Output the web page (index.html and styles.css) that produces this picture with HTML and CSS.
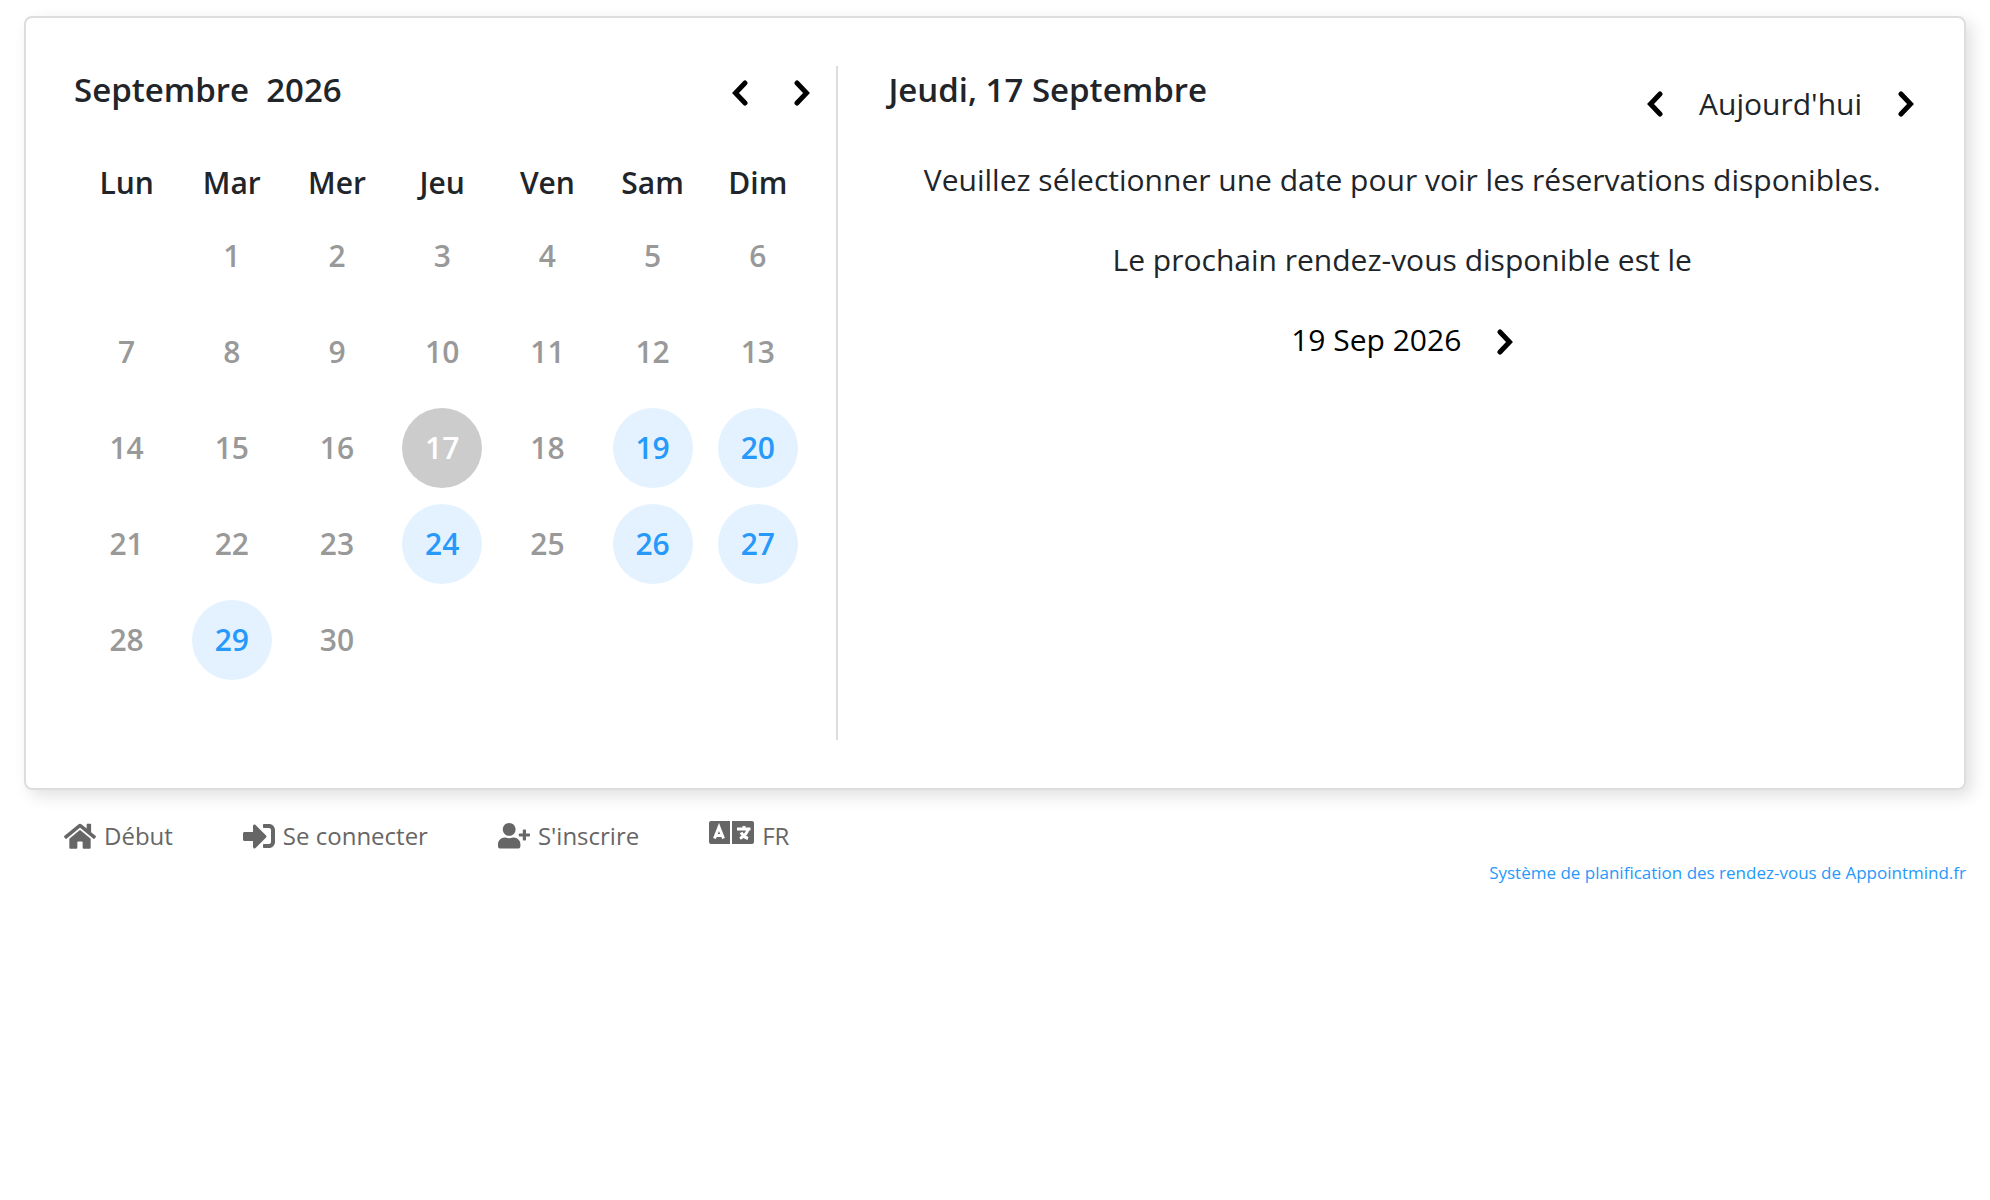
FILE: index.html
```html
<!DOCTYPE html>
<html lang="fr">
<head>
    <meta charset="UTF-8">
    <meta name="viewport" content="width=device-width, initial-scale=1.0">
    <title>Calendrier des rendez-vous</title>
    <link rel="stylesheet" href="styles.css">
</head>
<body>

    <!-- shared chevrons -->
    <svg class="sprite" aria-hidden="true">
        <symbol id="chevron-left" viewBox="0 0 16 26">
            <path d="M13 3L3.500 13L13 23" fill="none" stroke="#000" stroke-width="5" stroke-linecap="round" stroke-linejoin="miter"/>
        </symbol>
        <symbol id="chevron-right" viewBox="0 0 16 26">
            <path d="M3 3L12.500 13L3 23" fill="none" stroke="#000" stroke-width="5" stroke-linecap="round" stroke-linejoin="miter"/>
        </symbol>
    </svg>

    <main class="card">
        <section class="month">
            <div class="month-header">
                <h2>Septembre&nbsp; 2026</h2>
                <div class="month-nav">
                    <button type="button" class="arrow" aria-label="Mois précédent"><svg><use href="#chevron-left"/></svg></button>
                    <button type="button" class="arrow" aria-label="Mois suivant"><svg><use href="#chevron-right"/></svg></button>
                </div>
            </div>

            <table class="calendar">
                <thead>
                    <tr><th>Lun</th><th>Mar</th><th>Mer</th><th>Jeu</th><th>Ven</th><th>Sam</th><th>Dim</th></tr>
                </thead>
                <tbody>
                    <tr><td></td><td>1</td><td>2</td><td>3</td><td>4</td><td>5</td><td>6</td></tr>
                    <tr><td>7</td><td>8</td><td>9</td><td>10</td><td>11</td><td>12</td><td>13</td></tr>
                    <tr><td>14</td><td>15</td><td>16</td><td><span class="day selected">17</span></td><td>18</td><td><a href="#" class="day free">19</a></td><td><a href="#" class="day free">20</a></td></tr>
                    <tr><td>21</td><td>22</td><td>23</td><td><a href="#" class="day free">24</a></td><td>25</td><td><a href="#" class="day free">26</a></td><td><a href="#" class="day free">27</a></td></tr>
                    <tr><td>28</td><td><a href="#" class="day free">29</a></td><td>30</td><td></td><td></td><td></td><td></td></tr>
                </tbody>
            </table>
        </section>

        <section class="agenda">
            <div class="agenda-header">
                <h2>Jeudi, 17 Septembre</h2>
                <div class="day-nav">
                    <button type="button" class="arrow" aria-label="Jour précédent"><svg><use href="#chevron-left"/></svg></button>
                    <span>Aujourd'hui</span>
                    <button type="button" class="arrow" aria-label="Jour suivant"><svg><use href="#chevron-right"/></svg></button>
                </div>
            </div>
            <div class="agenda-body">
                <p>Veuillez sélectionner une date pour voir les réservations disponibles.</p>
                <p>Le prochain rendez-vous disponible est le</p>
                <a href="#" class="next-date">19 Sep 2026 <svg><use href="#chevron-right"/></svg></a>
            </div>
        </section>
    </main>

    <nav class="menu">
        <a href="#">
            <svg class="icon" viewBox="0 0 576 512"><path d="M280.370 148.260L96 300.110V464a16 16 0 0 0 16 16l112.060-.29a16 16 0 0 0 15.920-16V368a16 16 0 0 1 16-16h64a16 16 0 0 1 16 16v95.640a16 16 0 0 0 16 16.050L464 480a16 16 0 0 0 16-16V300L295.670 148.260a12.190 12.190 0 0 0-15.300 0zM571.600 251.470L488 182.560V44.050a12 12 0 0 0-12-12h-56a12 12 0 0 0-12 12v72.610L318.470 43a48 48 0 0 0-61 0L4.340 251.470a12 12 0 0 0-1.600 16.900l25.500 31A12 12 0 0 0 45.150 301l235.220-193.740a12.190 12.190 0 0 1 15.300 0L530.900 301a12 12 0 0 0 16.900-1.600l25.500-31a12 12 0 0 0-1.700-16.930z"/></svg>
            Début
        </a>
        <a href="#">
            <svg class="icon" viewBox="0 0 512 512"><path d="M416 448h-84c-6.600 0-12-5.400-12-12v-40c0-6.600 5.400-12 12-12h84c17.700 0 32-14.300 32-32V160c0-17.700-14.300-32-32-32h-84c-6.600 0-12-5.400-12-12V76c0-6.600 5.400-12 12-12h84c53 0 96 43 96 96v192c0 53-43 96-96 96zm-47-201L201 79c-15-15-41-4.500-41 17v96H24c-13.300 0-24 10.700-24 24v96c0 13.300 10.700 24 24 24h136v96c0 21.500 26 32 41 17l168-168c9.300-9.400 9.300-24.600 0-34z"/></svg>
            Se connecter
        </a>
        <a href="#">
            <svg class="icon" viewBox="0 0 640 512"><path d="M624 208h-64v-64c0-8.800-7.200-16-16-16h-32c-8.800 0-16 7.200-16 16v64h-64c-8.800 0-16 7.200-16 16v32c0 8.800 7.200 16 16 16h64v64c0 8.800 7.200 16 16 16h32c8.800 0 16-7.200 16-16v-64h64c8.800 0 16-7.200 16-16v-32c0-8.800-7.200-16-16-16zm-400 48c70.700 0 128-57.300 128-128S294.700 0 224 0 96 57.300 96 128s57.300 128 128 128zm89.600 32h-16.700c-22.200 10.200-46.900 16-72.900 16s-50.600-5.800-72.900-16h-16.700C60.200 288 0 348.200 0 422.400V464c0 26.500 21.500 48 48 48h352c26.500 0 48-21.500 48-48v-41.600c0-74.200-60.200-134.400-134.400-134.400z"/></svg>
            S'inscrire
        </a>
        <a href="#">
            <svg class="icon-lang" viewBox="0 0 45 24">
                <path d="M2 0h19v23H2a2 2 0 0 1-2-2V2a2 2 0 0 1 2-2zM23 0h20a2 2 0 0 1 2 2v19a2 2 0 0 1-2 2H23z"/>
                <path d="M5.500 17.500L10 6L14.500 17.500M7 14.500h6M28 8h13.500M35 5v3M39 8.500q-2 6-8 9M32 11.500q2.500 4.500 7 6" fill="none" stroke="#fff" stroke-width="3"/>
            </svg>
            FR
        </a>
    </nav>

    <footer class="credit">
        <a href="#">Système de planification des rendez-vous de Appointmind.fr</a>
    </footer>

</body>
</html>
```
FILE: styles.css
```css
* {
    box-sizing: border-box;
}

body {
    margin: 0;
    padding: 16px 24px;
    font-family: "Open Sans", "Noto Sans", sans-serif;
    font-size: 30px;
    line-height: 48px;
    color: #212529;
    background-color: #fff;
}

h2 {
    margin: 0;
    font-size: 33px;
    font-weight: 600;
    line-height: 48px;
}

p {
    margin: 0;
}

a {
    text-decoration: none;
}

.sprite {
    display: none;
}

.card {
    display: flex;
    padding: 48px;
    border: 2px solid #ddd;
    border-radius: 8px;
    box-shadow: 6px 6px 16px rgba(0, 0, 0, 0.12);
}

/* left side: month */
.month {
    flex: 0 0 41.5%;
    padding-right: 26px;
    padding-bottom: 52px;
    border-right: 2px solid #ddd;
}

.month-header {
    display: flex;
    justify-content: space-between;
    align-items: center;
}

.month-nav {
    display: flex;
    gap: 46px;
    padding-top: 6px;
}

.arrow {
    display: flex;
    padding: 0;
    border: 0;
    background: none;
    cursor: pointer;
}

.arrow svg,
.next-date svg {
    width: 16px;
    height: 26px;
}

.calendar {
    width: 100%;
    margin-top: 36px;
    table-layout: fixed;
    border-collapse: collapse;
    text-align: center;
    font-weight: 600;
}

.calendar th {
    height: 58px;
    padding: 8px 0 0;
    font-weight: 600;
}

.calendar td {
    height: 96px;
    padding: 0;
    color: #999;
}

.day {
    display: block;
    width: 80px;
    margin: 0 auto;
    border-radius: 50%;
    line-height: 80px;
}

.free {
    color: #2699fb;
    background-color: #e3f2fe;
}

.selected {
    color: #fff;
    background-color: #ccc;
}

/* right side: appointments of the day */
.agenda {
    flex: 1;
    padding-left: 50px;
}

.agenda-header {
    display: flex;
    justify-content: space-between;
}

.day-nav {
    display: flex;
    align-items: center;
    gap: 36px;
    padding: 14px 2px 0 0;
}

.agenda-body {
    display: flex;
    flex-direction: column;
    align-items: center;
    gap: 32px;
    margin-top: 28px;
    text-align: center;
}

.next-date {
    display: flex;
    align-items: center;
    gap: 36px;
    color: #000;
}

.next-date svg {
    margin-top: 4px;
}

/* bottom menu */
.menu {
    display: flex;
    gap: 70px;
    padding: 22px 40px 0;
    font-size: 24px;
}

.menu a {
    display: flex;
    align-items: center;
    gap: 8px;
    color: #666;
}

.menu svg {
    fill: #666;
}

.icon {
    width: 32px;
}

.icon-lang {
    width: 45px;
    margin-bottom: 6px;
}

.credit {
    text-align: right;
    font-size: 17px;
    line-height: 26px;
}

.credit a {
    color: #2699fb;
}
```
